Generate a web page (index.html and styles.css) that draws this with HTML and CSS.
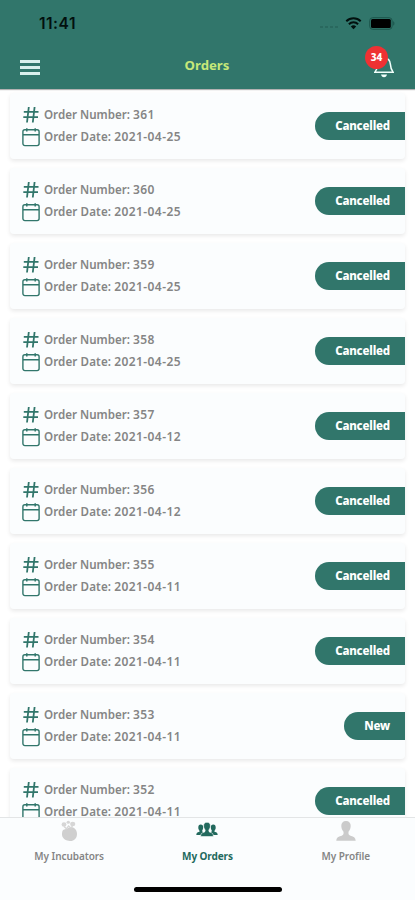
FILE: index.html
```html
<!DOCTYPE html>
<html lang="en">
<head>
<meta charset="utf-8">
<title>Orders</title>
<link rel="stylesheet" href="styles.css">
</head>
<body>
<svg class="defs" aria-hidden="true">
  <symbol id="hash" viewBox="0 0 18 20"><path d="M6.800 3 5 18.500M12.600 3 10.800 18.500M1.800 7.800h14.700M1.300 13.200H16" fill="none" stroke="currentColor" stroke-width="1.800"/></symbol>
  <symbol id="calendar" viewBox="0 0 18 20"><rect x=".9" y="2.800" width="16.200" height="15.800" rx="2" fill="none" stroke="currentColor" stroke-width="1.400"/><path d="M1 7.700h16M4.800 1.200v3.200M13.200 1.200v3.200" fill="none" stroke="currentColor" stroke-width="1.500"/></symbol>
</svg>
<div class="app">
  <header class="header">
    <div class="status">
      <span class="time">11:41</span>
      <span class="status-icons">
        <span class="signal"><i></i><i></i><i></i><i></i></span>
        <svg width="17" height="13" viewBox="0 0 17 13"><path d="M1.3 4.3a10.3 10.3 0 0 1 14.4 0M3.9 7.2a6.5 6.5 0 0 1 9.2 0" fill="none" stroke="#02100e" stroke-width="2"/><path d="M5.8 9.5a3.9 3.9 0 0 1 5.4 0L8.5 12.3z" fill="#02100e"/></svg>
        <svg width="26" height="13" viewBox="0 0 26 13"><rect x=".7" y=".7" width="22.4" height="11.6" rx="3" fill="none" stroke="#1c564c" stroke-width="1"/><rect x="2" y="2" width="19.8" height="9" rx="1.5" fill="#000"/><path d="M24.2 4.3c1.6.5 1.6 3.9 0 4.4z" fill="#1c564c"/></svg>
      </span>
    </div>
    <div class="toolbar">
      <button class="menu" aria-label="Menu"><i></i><i></i><i></i></button>
      <h1 class="title">Orders</h1>
      <div class="bell">
        <svg width="20" height="23" viewBox="0 0 20 23"><path d="M.9 17.2h18.2c-2.1-2.4-2.5-4.6-2.7-7.8C16.1 5.2 14 3 10 3S3.9 5.2 3.6 9.4c-.2 3.2-.6 5.4-2.7 7.8z" fill="none" stroke="#f2fffb" stroke-width="1.5"/><path d="M7 19.6h6c-.4 1.6-1.3 2.6-3 2.6s-2.6-1-3-2.6z" fill="#f2fffb"/></svg>
        <span class="badge">34</span>
      </div>
    </div>
  </header>
  <main class="orders" id="orders"></main>
  <nav class="tabs">
    <a class="tab">
      <svg width="18" height="22" viewBox="0 0 18 22"><path d="M2.200 12C2.800 9 5.200 9.800 7.800 8.300c1.600-1.300 5.200-1.500 6.900.1 2.600 2.300 2.900 6.400 1.400 9.300-1.700 3-5.600 4.100-8.900 2.900C3 19.300 1.300 16 2.200 12z" fill="#cfcfcf"/><g fill="#d6d6d6"><ellipse cx="4" cy="4.500" rx="2.400" ry="2.300"/><ellipse cx="8.300" cy="2.300" rx="1.700" ry="1.500"/><ellipse cx="12.700" cy="4" rx="2.600" ry="2.200"/></g><path d="m4 6.500 2.500 2.300 2-2.800 2.500 2 2-3" fill="none" stroke="#d6d6d6" stroke-width="1.300"/></svg>
      <span>My Incubators</span>
    </a>
    <a class="tab active">
      <svg width="22" height="22" viewBox="0 0 22 22"><g fill="currentColor"><path d="M4.700 4.500c1.700 0 2.600 1.200 2.500 3-.1 1.500-.5 2.300-1 3 0 1 .4 1.500 1.300 1.900-.9.500-1.400 1.300-1.500 2.600H.3c.1-2 .9-2.600 3-3.200.4-.2.4-.8 0-1.400-.6-.8-1-1.600-1-2.900 0-1.800.8-3 2.400-3z"/><path d="M17.300 4.500c-1.700 0-2.600 1.200-2.500 3 .1 1.500.5 2.300 1 3 0 1-.4 1.500-1.300 1.900.9.500 1.400 1.300 1.500 2.600h5.700c-.1-2-.9-2.600-3-3.200-.4-.2-.4-.8 0-1.400.6-.8 1-1.600 1-2.900 0-1.800-.8-3-2.400-3z"/><path stroke="#fbfdfe" stroke-width=".6" d="M11 2.300c2.200 0 3.500 1.500 3.400 3.800-.1 1.800-.8 2.900-1.500 3.800-.3 1.400.2 2.100 1.900 2.600 1.900.6 2.500 1.400 2.600 4.100H4.600c.1-2.700.7-3.500 2.600-4.100 1.700-.5 2.200-1.200 1.900-2.600-.7-.9-1.400-2-1.500-3.800-.1-2.300 1.200-3.800 3.400-3.800z"/></g></svg>
      <span>My Orders</span>
    </a>
    <a class="tab">
      <svg width="20" height="22" viewBox="0 0 20 22"><path d="M10 1c3.100 0 4.800 2 4.700 5-.1 2.500-.9 4.300-2.200 5.800-.2 2.600.1 3.400 2.600 4.200 3 .9 4.300 1.700 4.600 4.800H.3c.3-3.100 1.600-3.900 4.600-4.800 2.500-.8 2.800-1.600 2.600-4.200C6.200 10.300 5.400 8.500 5.300 6 5.200 3 6.900 1 10 1z" fill="#cbcbcb"/></svg>
      <span>My Profile</span>
    </a>
    <div class="home"></div>
  </nav>
</div>
<script src="app.js"></script>
</body>
</html>
```
FILE: styles.css
```css
* { box-sizing: border-box; }
body { margin: 0; background: #fff; font-family: "Noto Sans", "Open Sans", sans-serif; }
.defs { position: absolute; width: 0; height: 0; }
.app { width: 415px; height: 900px; display: flex; flex-direction: column; overflow: hidden; }
.header { height: 89px; flex: none; background: #31766b; box-shadow: 0 1px 1px rgba(0, 0, 0, .3); z-index: 1; }
.status { height: 46px; display: flex; justify-content: space-between; padding: 0 20px 0 39px; }
.time { font: 600 15.500px/47px Inter, sans-serif; letter-spacing: .5px; color: #02100e; }
.status-icons { display: flex; align-items: center; gap: 7px; }
.signal { display: flex; gap: 2px; padding-top: 7px; }
.signal i { width: 3px; height: 2px; background: #255f55; opacity: .6; }
.toolbar { height: 43px; display: grid; grid-template-columns: 1fr auto 1fr; padding: 0 21px 0 20px; }
.menu { border: 0; padding: 0; background: none; width: 20px; height: 15px; margin-top: 14px; display: flex; flex-direction: column; justify-content: space-between; }
.menu i { width: 20px; height: 3px; background: #d9f0ec; }
.title { margin: 0; font-size: 13.200px; line-height: 39px; font-weight: 700; color: #c6e879; }
.bell { position: relative; justify-self: end; width: 20px; height: 23px; margin-top: 9px; }
.bell svg { display: block; }
.badge { position: absolute; left: -9px; top: -9px; width: 23px; height: 23px; border-radius: 50%; background: #ee3133; color: #fff; font-size: 10px; line-height: 22px; font-weight: 800; text-align: center; }
.orders { height: 728px; flex: none; overflow: hidden; padding: 4px 10px 0; display: flex; flex-direction: column; gap: 9px; }
.card { height: 66px; flex: none; display: flex; justify-content: space-between; align-items: center; padding-left: 12px; border-radius: 4px; background: #fbfdfe; box-shadow: 0 2px 4px rgba(0, 0, 0, .09); }
.row { display: flex; align-items: center; gap: 4px; height: 22.500px; font-size: 11.600px; font-weight: 600; color: #858585; white-space: pre; }
.row svg { width: 18px; height: 20px; color: #31766b; }
.value { font-size: 12px; letter-spacing: .32px; }
.date { letter-spacing: .1px; }
.date .value { letter-spacing: .42px; }
.details { padding-bottom: 1px; }
.pill { height: 28px; padding: 0 15px 0 20px; border-radius: 14px 0 0 14px; background: #31766b; color: #fff; font-size: 11.500px; line-height: 27px; font-weight: 800; letter-spacing: -.18px; }
.tabs { position: relative; height: 83px; flex: none; display: flex; border-top: 1px solid #e3e5e6; background: #fbfdfe; }
.tab { flex: 1; display: flex; flex-direction: column; align-items: center; padding-top: 2px; font-size: 10px; line-height: 15px; font-weight: 600; letter-spacing: -.06px; color: #858585; }
.tab svg { margin-bottom: 7px; flex: none; }
.active { color: #22695d; font-weight: 700; letter-spacing: -.1px; }
.home { position: absolute; left: 134px; bottom: 8px; width: 148px; height: 5px; border-radius: 3px; background: #000; }
```
FILE: app.js
```js
const orders = [
  [361, "2021-04-25", "Cancelled"],
  [360, "2021-04-25", "Cancelled"],
  [359, "2021-04-25", "Cancelled"],
  [358, "2021-04-25", "Cancelled"],
  [357, "2021-04-12", "Cancelled"],
  [356, "2021-04-12", "Cancelled"],
  [355, "2021-04-11", "Cancelled"],
  [354, "2021-04-11", "Cancelled"],
  [353, "2021-04-11", "New"],
  [352, "2021-04-11", "Cancelled"]
];

document.getElementById("orders").innerHTML = orders.map(([number, date, status]) => `
  <article class="card">
    <div class="details">
      <div class="row"><svg><use href="#hash"/></svg><span>Order Number: <span class="value">${number}</span></span></div>
      <div class="row"><svg><use href="#calendar"/></svg><span class="date">Order Date: <span class="value">${date}</span></span></div>
    </div>
    <span class="pill">${status}</span>
  </article>`).join("");
```
